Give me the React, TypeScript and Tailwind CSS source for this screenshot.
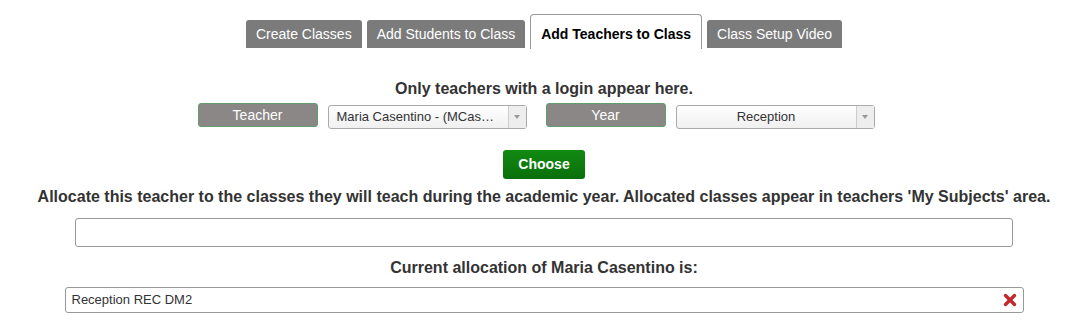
import { useState } from "react";

const TABS = [
  "Create Classes",
  "Add Students to Class",
  "Add Teachers to Class",
  "Class Setup Video",
];

const FieldLabel = ({ children }: { children: string }) => (
  <div className="flex h-[24px] w-[120px] items-center justify-center rounded-[3px] border border-[#5f9d6d] bg-[#8a8786] text-[14px] text-white">
    {children}
  </div>
);

const SelectBox = ({ value, center }: { value: string; center?: boolean }) => (
  <div className="mt-[2px] flex h-[24px] w-[199px] items-stretch rounded-[3px] border border-[#aaa] bg-gradient-to-b from-white to-[#f0f0f0] text-[13px] text-[#333]">
    <div
      className={`flex flex-1 items-center overflow-hidden whitespace-nowrap px-[8px] ${
        center ? "justify-center" : ""
      }`}
    >
      {value}
    </div>
    <div className="flex w-[18px] items-center justify-center border-l border-[#ccc] bg-[#eee]">
      <span className="h-0 w-0 border-x-[3px] border-t-[4px] border-x-transparent border-t-[#999]" />
    </div>
  </div>
);

export default function App() {
  const [active, setActive] = useState(2);

  return (
    <div className="h-[329px] w-[1071px] bg-white pl-[17px] font-['Liberation_Sans',Arial,sans-serif] text-[#333]">
      <div className="flex flex-col items-center">
        <div className="mt-[14px] flex h-[34px] items-end gap-[5px]">
          {TABS.map((tab, i) =>
            i === active ? (
              <button
                key={tab}
                onClick={() => setActive(i)}
                className="-mb-px h-[35px] rounded-t-[4px] border border-b-0 border-[#999] bg-white px-[10px] pt-[4px] text-[14px] font-bold text-black"
              >
                {tab}
              </button>
            ) : (
              <button
                key={tab}
                onClick={() => setActive(i)}
                className="h-[28px] rounded-t-[3px] bg-[#7b7b7b] px-[10px] text-[14px] text-white"
              >
                {tab}
              </button>
            ),
          )}
        </div>

        <div className="mt-[32px] text-[16px] font-bold leading-[18px]">
          Only teachers with a login appear here.
        </div>

        <div className="mr-[16px] mt-[5px] flex items-start">
          <FieldLabel>Teacher</FieldLabel>
          <div className="ml-[10px]">
            <SelectBox value="Maria Casentino - (MCas…" />
          </div>
          <div className="ml-[19px]">
            <FieldLabel>Year</FieldLabel>
          </div>
          <div className="ml-[10px]">
            <SelectBox value="Reception" center />
          </div>
        </div>

        <button className="mt-[21px] h-[29px] w-[82px] rounded-[3px] bg-gradient-to-b from-[#128a12] to-[#0a6f0a] text-[14px] font-bold text-white">
          Choose
        </button>

        <div className="mt-[9px] text-[16px] font-bold leading-[18px]">
          Allocate this teacher to the classes they will teach during the
          academic year. Allocated classes appear in teachers 'My Subjects'
          area.
        </div>

        <div className="mt-[12px] h-[29px] w-[938px] rounded-[3px] border border-[#999] bg-white" />

        <div className="mt-[12px] text-[16px] font-bold leading-[18px]">
          Current allocation of Maria Casentino is:
        </div>

        <div className="mt-[10px] flex h-[26px] w-[959px] items-center justify-between rounded-[3px] border border-[#999] bg-white pl-[6px] pr-[6px] text-[13px] text-[#333]">
          <span>Reception REC DM2</span>
          <svg width="14" height="14" viewBox="0 0 14 14">
            <path
              d="M2.5 2.5 L11.5 11.5 M11.5 2.5 L2.5 11.5"
              stroke="#c4282c"
              strokeWidth="3.4"
              strokeLinecap="round"
            />
          </svg>
        </div>
      </div>
    </div>
  );
}
